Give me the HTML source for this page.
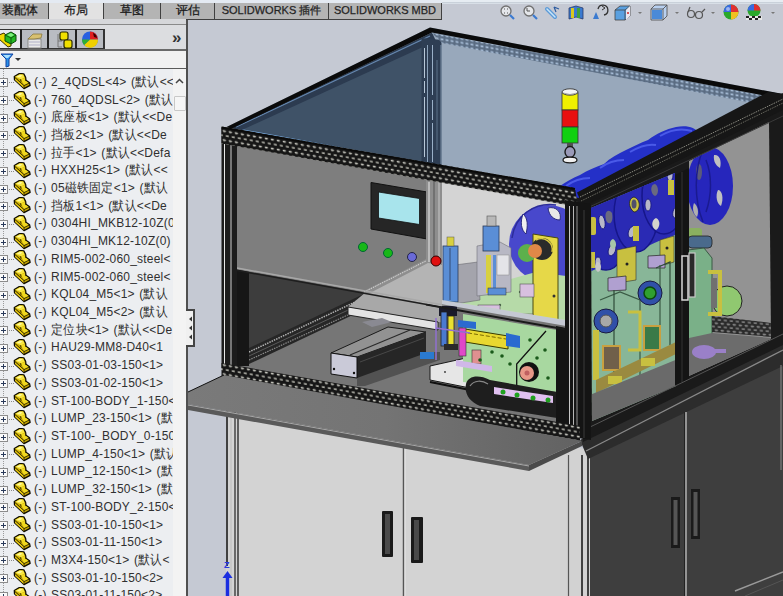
<!DOCTYPE html>
<html><head><meta charset="utf-8">
<style>
*{margin:0;padding:0;box-sizing:border-box}
html,body{width:783px;height:596px;overflow:hidden;background:#c5c9d3;font-family:"Liberation Sans",sans-serif}
#topstrip{position:absolute;left:0;top:0;width:783px;height:4px;background:#e4eaf2}
.tab{position:absolute;top:3px;height:17px;background:#b4b4b4;border-right:1px solid #404040;border-bottom:1px solid #404040;font-size:12px;color:#1a1a1a;text-align:center;line-height:14px;white-space:nowrap;font-weight:normal;-webkit-text-stroke:0.25px #1a1a1a}
.tab.act{background:#e2e2e2;height:19px;border-bottom:1px solid #606060}
#panel{position:absolute;left:0;top:20px;width:188px;height:576px;background:#d8d8d8;border-right:2px solid #505050}
#filt{position:absolute;left:0;top:51px;width:186px;height:18px;background:#f1f1f1;border-bottom:1px solid #5a5a5a}
#tree{position:absolute;left:0;top:69px;width:173px;height:527px;background:#eceef1;overflow:hidden}#tree:before{content:"";position:absolute;left:3px;top:0;height:527px;border-left:1px dotted #9a9a9a}
#sb{position:absolute;left:173px;top:69px;width:13px;height:527px;background:#f3f3f3}
.row{position:absolute;left:0;height:17px;width:173px;white-space:nowrap}
.pb{position:absolute;left:-1px;top:4.5px;width:9px;height:9px;border:1px solid #8c8c8c;background:#fafafa}.pb:before{content:"";position:absolute;left:1px;top:3px;width:5px;height:1px;background:#2a3a5a}.pb:after{content:"";position:absolute;left:3px;top:1px;width:1px;height:5px;background:#2a3a5a}
.dl{position:absolute;left:9px;top:8.5px;width:5px;border-top:1px dotted #8a8a8a}
.ic{position:absolute;left:13px;top:-0.5px}
.tx{position:absolute;left:34px;top:0px;font-size:12px;line-height:17px;color:#303030;word-spacing:1px;letter-spacing:0.2px;transform:scaleY(1.1);transform-origin:0 50%}
svg.scene{position:absolute;left:0;top:0}
</style></head><body>
<div id="topstrip"></div>
<div class="tab" style="left:0;width:49px;text-align:left;padding-left:2px">装配体</div>
<div class="tab act" style="left:49px;width:55px">布局</div>
<div class="tab" style="left:104px;width:57px">草图</div>
<div class="tab" style="left:161px;width:54px">评估</div>
<div class="tab" style="left:215px;width:114px;font-size:11px;font-weight:normal;color:#2a2a2a;line-height:14px">SOLIDWORKS 插件</div>
<div class="tab" style="left:329px;width:113px;font-size:11px;font-weight:normal;color:#2a2a2a;line-height:14px">SOLIDWORKS MBD</div>
<div id="panel"></div>
<div style="position:absolute;left:0;top:19px;width:186px;height:6px;background:#d6d7da;border-bottom:1px solid #8a8a8a"></div>
<div style="position:absolute;left:0;top:25px;width:186px;height:25px;background:#dcdde0"></div>
<div style="position:absolute;left:0;top:29px;width:104px;height:21px;background:#b9bcc2;border-top:1px solid #333;border-bottom:2px solid #333"></div>
<div style="position:absolute;left:0;top:30px;width:20px;height:18px;background:#e9ebee"></div>
<div style="position:absolute;left:20px;top:29px;width:2px;height:21px;background:#222"></div>
<div style="position:absolute;left:47px;top:29px;width:2px;height:21px;background:#222"></div>
<div style="position:absolute;left:75px;top:29px;width:2px;height:21px;background:#222"></div>
<div style="position:absolute;left:103px;top:29px;width:2px;height:21px;background:#333"></div>
<div style="position:absolute;left:0;top:49px;width:186px;height:2px;background:#6a6a6a"></div>
<svg style="position:absolute;left:0;top:29px" width="110" height="22" viewBox="0 0 110 22">
 <path d="M-1 6 L4 4 L11 13 L11 17 L8 18 L-1 10 Z" fill="#f0d800" stroke="#3a3200" stroke-width="1"/>
 <path d="M5 6 L11 3 L16 6 L16 12 L11 15 L5 12 Z" fill="#22b822" stroke="#0a4a0a" stroke-width="1"/>
 <path d="M5 6 L11 9 L16 6 M11 9 L11 15" stroke="#0a4a0a" stroke-width="0.8" fill="none"/>
 <path d="M7 6 L11 4 L14 6 L11 8 Z" fill="#7ef07e"/>
 <rect x="28" y="10" width="13" height="9" fill="#e8e8e8" stroke="#8a8a8a"/>
 <path d="M29 13 H40 M29 16 H40" stroke="#b0b0c8" stroke-width="1"/>
 <path d="M28 10 L33 5 L42 5 L41 9 L34 10 Z" fill="#d8c070" stroke="#8a7a40" stroke-width="0.8"/>
 <path d="M58 5 V18 H62 M58 12 H62" stroke="#777" stroke-width="1" fill="none"/>
 <rect x="60" y="3" width="8" height="8" rx="2" fill="#f0e000" stroke="#2a2a00" stroke-width="1.2"/>
 <rect x="64" y="11" width="8" height="8" rx="2" fill="#f0e000" stroke="#2a2a00" stroke-width="1.2"/>
 <circle cx="90" cy="10.5" r="8" fill="#2a60e0"/>
 <path d="M90 2.5 A8 8 0 0 1 98 10.5 L90 10.5 Z" fill="#e02020"/>
 <path d="M90 10.5 L98 10.5 A8 8 0 0 1 84 16 Z" fill="#f0d000"/>
 <path d="M90 10.5 L84 16 A8 8 0 0 1 82 10.5 Z" fill="#30b030"/>
 <path d="M93 4 A6 6 0 0 1 97 9 L94 8 Z" fill="#400000"/>
</svg>
<div style="position:absolute;left:172px;top:29px;font-size:17px;font-weight:bold;color:#333;line-height:18px">»</div>
<div id="filt"></div>
<svg style="position:absolute;left:0;top:52px" width="30" height="16" viewBox="0 0 30 16">
 <path d="M1 2 H13 L9 7 V14 L6 15 V7 Z" fill="#2a90e8" stroke="#1040a0" stroke-width="1"/>
 <path d="M3 3 H11 L8 6 H6 Z" fill="#a8e0ff"/>
 <path d="M15 6 H21 L18 9 Z" fill="#333"/>
</svg>
<div id="tree">
<div class="row" style="top:4.80px"><span class="pb"></span><span class="dl"></span><svg class="ic" width="19" height="18" viewBox="0 0 19 18"><path d="M1.3 3.5 L6.5 0.4 L10.8 0.9 L12.6 4.4 L13 7.4 L16.6 9.9 L17.1 12.4 L11 15.6 L1.5 6.8 Z" fill="#c8a800" stroke="#0e0c00" stroke-width="1.3" stroke-linejoin="round"/><path d="M2.2 3.8 L6.8 1.2 L10.2 1.6 L11.6 4.6 L8 6.4 L7.4 6.2 Z" fill="#f8e640"/><path d="M8 6.4 L12.2 4.8 L12.4 7.6 L16 10.2 L11.2 12.6 Z" fill="#f0d820"/><path d="M2 5 L11 12.8 L11 15.2 L2 7 Z" fill="#e8c810"/><path d="M2 4.6 L11 12.6 L16.4 10 M11 12.6 L11 15.4 M7.6 6.2 L8 8.8 M12.4 5 L12.6 7.8" fill="none" stroke="#2a2200" stroke-width="0.9"/><path d="M3.5 4 L6.8 2 L9.5 2.2 L7 4.2 Z" fill="#fff8a0"/></svg><span class="tx">(-) 2_4QDSL&lt;4&gt; (默认&lt;&lt;</span></div>
<div class="row" style="top:22.51px"><span class="pb"></span><span class="dl"></span><svg class="ic" width="19" height="18" viewBox="0 0 19 18"><path d="M1.3 3.5 L6.5 0.4 L10.8 0.9 L12.6 4.4 L13 7.4 L16.6 9.9 L17.1 12.4 L11 15.6 L1.5 6.8 Z" fill="#c8a800" stroke="#0e0c00" stroke-width="1.3" stroke-linejoin="round"/><path d="M2.2 3.8 L6.8 1.2 L10.2 1.6 L11.6 4.6 L8 6.4 L7.4 6.2 Z" fill="#f8e640"/><path d="M8 6.4 L12.2 4.8 L12.4 7.6 L16 10.2 L11.2 12.6 Z" fill="#f0d820"/><path d="M2 5 L11 12.8 L11 15.2 L2 7 Z" fill="#e8c810"/><path d="M2 4.6 L11 12.6 L16.4 10 M11 12.6 L11 15.4 M7.6 6.2 L8 8.8 M12.4 5 L12.6 7.8" fill="none" stroke="#2a2200" stroke-width="0.9"/><path d="M3.5 4 L6.8 2 L9.5 2.2 L7 4.2 Z" fill="#fff8a0"/></svg><span class="tx">(-) 760_4QDSL&lt;2&gt; (默认</span></div>
<div class="row" style="top:40.22px"><span class="pb"></span><span class="dl"></span><svg class="ic" width="19" height="18" viewBox="0 0 19 18"><path d="M1.3 3.5 L6.5 0.4 L10.8 0.9 L12.6 4.4 L13 7.4 L16.6 9.9 L17.1 12.4 L11 15.6 L1.5 6.8 Z" fill="#c8a800" stroke="#0e0c00" stroke-width="1.3" stroke-linejoin="round"/><path d="M2.2 3.8 L6.8 1.2 L10.2 1.6 L11.6 4.6 L8 6.4 L7.4 6.2 Z" fill="#f8e640"/><path d="M8 6.4 L12.2 4.8 L12.4 7.6 L16 10.2 L11.2 12.6 Z" fill="#f0d820"/><path d="M2 5 L11 12.8 L11 15.2 L2 7 Z" fill="#e8c810"/><path d="M2 4.6 L11 12.6 L16.4 10 M11 12.6 L11 15.4 M7.6 6.2 L8 8.8 M12.4 5 L12.6 7.8" fill="none" stroke="#2a2200" stroke-width="0.9"/><path d="M3.5 4 L6.8 2 L9.5 2.2 L7 4.2 Z" fill="#fff8a0"/></svg><span class="tx">(-) 底座板&lt;1&gt; (默认&lt;&lt;De</span></div>
<div class="row" style="top:57.93px"><span class="pb"></span><span class="dl"></span><svg class="ic" width="19" height="18" viewBox="0 0 19 18"><path d="M1.3 3.5 L6.5 0.4 L10.8 0.9 L12.6 4.4 L13 7.4 L16.6 9.9 L17.1 12.4 L11 15.6 L1.5 6.8 Z" fill="#c8a800" stroke="#0e0c00" stroke-width="1.3" stroke-linejoin="round"/><path d="M2.2 3.8 L6.8 1.2 L10.2 1.6 L11.6 4.6 L8 6.4 L7.4 6.2 Z" fill="#f8e640"/><path d="M8 6.4 L12.2 4.8 L12.4 7.6 L16 10.2 L11.2 12.6 Z" fill="#f0d820"/><path d="M2 5 L11 12.8 L11 15.2 L2 7 Z" fill="#e8c810"/><path d="M2 4.6 L11 12.6 L16.4 10 M11 12.6 L11 15.4 M7.6 6.2 L8 8.8 M12.4 5 L12.6 7.8" fill="none" stroke="#2a2200" stroke-width="0.9"/><path d="M3.5 4 L6.8 2 L9.5 2.2 L7 4.2 Z" fill="#fff8a0"/></svg><span class="tx">(-) 挡板2&lt;1&gt; (默认&lt;&lt;De</span></div>
<div class="row" style="top:75.64px"><span class="pb"></span><span class="dl"></span><svg class="ic" width="19" height="18" viewBox="0 0 19 18"><path d="M1.3 3.5 L6.5 0.4 L10.8 0.9 L12.6 4.4 L13 7.4 L16.6 9.9 L17.1 12.4 L11 15.6 L1.5 6.8 Z" fill="#c8a800" stroke="#0e0c00" stroke-width="1.3" stroke-linejoin="round"/><path d="M2.2 3.8 L6.8 1.2 L10.2 1.6 L11.6 4.6 L8 6.4 L7.4 6.2 Z" fill="#f8e640"/><path d="M8 6.4 L12.2 4.8 L12.4 7.6 L16 10.2 L11.2 12.6 Z" fill="#f0d820"/><path d="M2 5 L11 12.8 L11 15.2 L2 7 Z" fill="#e8c810"/><path d="M2 4.6 L11 12.6 L16.4 10 M11 12.6 L11 15.4 M7.6 6.2 L8 8.8 M12.4 5 L12.6 7.8" fill="none" stroke="#2a2200" stroke-width="0.9"/><path d="M3.5 4 L6.8 2 L9.5 2.2 L7 4.2 Z" fill="#fff8a0"/></svg><span class="tx">(-) 拉手&lt;1&gt; (默认&lt;&lt;Defa</span></div>
<div class="row" style="top:93.35px"><span class="pb"></span><span class="dl"></span><svg class="ic" width="19" height="18" viewBox="0 0 19 18"><path d="M1.3 3.5 L6.5 0.4 L10.8 0.9 L12.6 4.4 L13 7.4 L16.6 9.9 L17.1 12.4 L11 15.6 L1.5 6.8 Z" fill="#c8a800" stroke="#0e0c00" stroke-width="1.3" stroke-linejoin="round"/><path d="M2.2 3.8 L6.8 1.2 L10.2 1.6 L11.6 4.6 L8 6.4 L7.4 6.2 Z" fill="#f8e640"/><path d="M8 6.4 L12.2 4.8 L12.4 7.6 L16 10.2 L11.2 12.6 Z" fill="#f0d820"/><path d="M2 5 L11 12.8 L11 15.2 L2 7 Z" fill="#e8c810"/><path d="M2 4.6 L11 12.6 L16.4 10 M11 12.6 L11 15.4 M7.6 6.2 L8 8.8 M12.4 5 L12.6 7.8" fill="none" stroke="#2a2200" stroke-width="0.9"/><path d="M3.5 4 L6.8 2 L9.5 2.2 L7 4.2 Z" fill="#fff8a0"/></svg><span class="tx">(-) HXXH25&lt;1&gt; (默认&lt;&lt;</span></div>
<div class="row" style="top:111.06px"><span class="pb"></span><span class="dl"></span><svg class="ic" width="19" height="18" viewBox="0 0 19 18"><path d="M1.3 3.5 L6.5 0.4 L10.8 0.9 L12.6 4.4 L13 7.4 L16.6 9.9 L17.1 12.4 L11 15.6 L1.5 6.8 Z" fill="#c8a800" stroke="#0e0c00" stroke-width="1.3" stroke-linejoin="round"/><path d="M2.2 3.8 L6.8 1.2 L10.2 1.6 L11.6 4.6 L8 6.4 L7.4 6.2 Z" fill="#f8e640"/><path d="M8 6.4 L12.2 4.8 L12.4 7.6 L16 10.2 L11.2 12.6 Z" fill="#f0d820"/><path d="M2 5 L11 12.8 L11 15.2 L2 7 Z" fill="#e8c810"/><path d="M2 4.6 L11 12.6 L16.4 10 M11 12.6 L11 15.4 M7.6 6.2 L8 8.8 M12.4 5 L12.6 7.8" fill="none" stroke="#2a2200" stroke-width="0.9"/><path d="M3.5 4 L6.8 2 L9.5 2.2 L7 4.2 Z" fill="#fff8a0"/></svg><span class="tx">(-) 05磁铁固定&lt;1&gt; (默认</span></div>
<div class="row" style="top:128.77px"><span class="pb"></span><span class="dl"></span><svg class="ic" width="19" height="18" viewBox="0 0 19 18"><path d="M1.3 3.5 L6.5 0.4 L10.8 0.9 L12.6 4.4 L13 7.4 L16.6 9.9 L17.1 12.4 L11 15.6 L1.5 6.8 Z" fill="#c8a800" stroke="#0e0c00" stroke-width="1.3" stroke-linejoin="round"/><path d="M2.2 3.8 L6.8 1.2 L10.2 1.6 L11.6 4.6 L8 6.4 L7.4 6.2 Z" fill="#f8e640"/><path d="M8 6.4 L12.2 4.8 L12.4 7.6 L16 10.2 L11.2 12.6 Z" fill="#f0d820"/><path d="M2 5 L11 12.8 L11 15.2 L2 7 Z" fill="#e8c810"/><path d="M2 4.6 L11 12.6 L16.4 10 M11 12.6 L11 15.4 M7.6 6.2 L8 8.8 M12.4 5 L12.6 7.8" fill="none" stroke="#2a2200" stroke-width="0.9"/><path d="M3.5 4 L6.8 2 L9.5 2.2 L7 4.2 Z" fill="#fff8a0"/></svg><span class="tx">(-) 挡板1&lt;1&gt; (默认&lt;&lt;De</span></div>
<div class="row" style="top:146.48px"><span class="pb"></span><span class="dl"></span><svg class="ic" width="19" height="18" viewBox="0 0 19 18"><path d="M1.3 3.5 L6.5 0.4 L10.8 0.9 L12.6 4.4 L13 7.4 L16.6 9.9 L17.1 12.4 L11 15.6 L1.5 6.8 Z" fill="#c8a800" stroke="#0e0c00" stroke-width="1.3" stroke-linejoin="round"/><path d="M2.2 3.8 L6.8 1.2 L10.2 1.6 L11.6 4.6 L8 6.4 L7.4 6.2 Z" fill="#f8e640"/><path d="M8 6.4 L12.2 4.8 L12.4 7.6 L16 10.2 L11.2 12.6 Z" fill="#f0d820"/><path d="M2 5 L11 12.8 L11 15.2 L2 7 Z" fill="#e8c810"/><path d="M2 4.6 L11 12.6 L16.4 10 M11 12.6 L11 15.4 M7.6 6.2 L8 8.8 M12.4 5 L12.6 7.8" fill="none" stroke="#2a2200" stroke-width="0.9"/><path d="M3.5 4 L6.8 2 L9.5 2.2 L7 4.2 Z" fill="#fff8a0"/></svg><span class="tx">(-) 0304HI_MKB12-10Z(0</span></div>
<div class="row" style="top:164.19px"><span class="pb"></span><span class="dl"></span><svg class="ic" width="19" height="18" viewBox="0 0 19 18"><path d="M1.3 3.5 L6.5 0.4 L10.8 0.9 L12.6 4.4 L13 7.4 L16.6 9.9 L17.1 12.4 L11 15.6 L1.5 6.8 Z" fill="#c8a800" stroke="#0e0c00" stroke-width="1.3" stroke-linejoin="round"/><path d="M2.2 3.8 L6.8 1.2 L10.2 1.6 L11.6 4.6 L8 6.4 L7.4 6.2 Z" fill="#f8e640"/><path d="M8 6.4 L12.2 4.8 L12.4 7.6 L16 10.2 L11.2 12.6 Z" fill="#f0d820"/><path d="M2 5 L11 12.8 L11 15.2 L2 7 Z" fill="#e8c810"/><path d="M2 4.6 L11 12.6 L16.4 10 M11 12.6 L11 15.4 M7.6 6.2 L8 8.8 M12.4 5 L12.6 7.8" fill="none" stroke="#2a2200" stroke-width="0.9"/><path d="M3.5 4 L6.8 2 L9.5 2.2 L7 4.2 Z" fill="#fff8a0"/></svg><span class="tx">(-) 0304HI_MK12-10Z(0)</span></div>
<div class="row" style="top:181.90px"><span class="pb"></span><span class="dl"></span><svg class="ic" width="19" height="18" viewBox="0 0 19 18"><path d="M1.3 3.5 L6.5 0.4 L10.8 0.9 L12.6 4.4 L13 7.4 L16.6 9.9 L17.1 12.4 L11 15.6 L1.5 6.8 Z" fill="#c8a800" stroke="#0e0c00" stroke-width="1.3" stroke-linejoin="round"/><path d="M2.2 3.8 L6.8 1.2 L10.2 1.6 L11.6 4.6 L8 6.4 L7.4 6.2 Z" fill="#f8e640"/><path d="M8 6.4 L12.2 4.8 L12.4 7.6 L16 10.2 L11.2 12.6 Z" fill="#f0d820"/><path d="M2 5 L11 12.8 L11 15.2 L2 7 Z" fill="#e8c810"/><path d="M2 4.6 L11 12.6 L16.4 10 M11 12.6 L11 15.4 M7.6 6.2 L8 8.8 M12.4 5 L12.6 7.8" fill="none" stroke="#2a2200" stroke-width="0.9"/><path d="M3.5 4 L6.8 2 L9.5 2.2 L7 4.2 Z" fill="#fff8a0"/></svg><span class="tx">(-) RIM5-002-060_steel&lt;</span></div>
<div class="row" style="top:199.61px"><span class="pb"></span><span class="dl"></span><svg class="ic" width="19" height="18" viewBox="0 0 19 18"><path d="M1.3 3.5 L6.5 0.4 L10.8 0.9 L12.6 4.4 L13 7.4 L16.6 9.9 L17.1 12.4 L11 15.6 L1.5 6.8 Z" fill="#c8a800" stroke="#0e0c00" stroke-width="1.3" stroke-linejoin="round"/><path d="M2.2 3.8 L6.8 1.2 L10.2 1.6 L11.6 4.6 L8 6.4 L7.4 6.2 Z" fill="#f8e640"/><path d="M8 6.4 L12.2 4.8 L12.4 7.6 L16 10.2 L11.2 12.6 Z" fill="#f0d820"/><path d="M2 5 L11 12.8 L11 15.2 L2 7 Z" fill="#e8c810"/><path d="M2 4.6 L11 12.6 L16.4 10 M11 12.6 L11 15.4 M7.6 6.2 L8 8.8 M12.4 5 L12.6 7.8" fill="none" stroke="#2a2200" stroke-width="0.9"/><path d="M3.5 4 L6.8 2 L9.5 2.2 L7 4.2 Z" fill="#fff8a0"/></svg><span class="tx">(-) RIM5-002-060_steel&lt;</span></div>
<div class="row" style="top:217.32px"><span class="pb"></span><span class="dl"></span><svg class="ic" width="19" height="18" viewBox="0 0 19 18"><path d="M1.3 3.5 L6.5 0.4 L10.8 0.9 L12.6 4.4 L13 7.4 L16.6 9.9 L17.1 12.4 L11 15.6 L1.5 6.8 Z" fill="#c8a800" stroke="#0e0c00" stroke-width="1.3" stroke-linejoin="round"/><path d="M2.2 3.8 L6.8 1.2 L10.2 1.6 L11.6 4.6 L8 6.4 L7.4 6.2 Z" fill="#f8e640"/><path d="M8 6.4 L12.2 4.8 L12.4 7.6 L16 10.2 L11.2 12.6 Z" fill="#f0d820"/><path d="M2 5 L11 12.8 L11 15.2 L2 7 Z" fill="#e8c810"/><path d="M2 4.6 L11 12.6 L16.4 10 M11 12.6 L11 15.4 M7.6 6.2 L8 8.8 M12.4 5 L12.6 7.8" fill="none" stroke="#2a2200" stroke-width="0.9"/><path d="M3.5 4 L6.8 2 L9.5 2.2 L7 4.2 Z" fill="#fff8a0"/></svg><span class="tx">(-) KQL04_M5&lt;1&gt; (默认</span></div>
<div class="row" style="top:235.03px"><span class="pb"></span><span class="dl"></span><svg class="ic" width="19" height="18" viewBox="0 0 19 18"><path d="M1.3 3.5 L6.5 0.4 L10.8 0.9 L12.6 4.4 L13 7.4 L16.6 9.9 L17.1 12.4 L11 15.6 L1.5 6.8 Z" fill="#c8a800" stroke="#0e0c00" stroke-width="1.3" stroke-linejoin="round"/><path d="M2.2 3.8 L6.8 1.2 L10.2 1.6 L11.6 4.6 L8 6.4 L7.4 6.2 Z" fill="#f8e640"/><path d="M8 6.4 L12.2 4.8 L12.4 7.6 L16 10.2 L11.2 12.6 Z" fill="#f0d820"/><path d="M2 5 L11 12.8 L11 15.2 L2 7 Z" fill="#e8c810"/><path d="M2 4.6 L11 12.6 L16.4 10 M11 12.6 L11 15.4 M7.6 6.2 L8 8.8 M12.4 5 L12.6 7.8" fill="none" stroke="#2a2200" stroke-width="0.9"/><path d="M3.5 4 L6.8 2 L9.5 2.2 L7 4.2 Z" fill="#fff8a0"/></svg><span class="tx">(-) KQL04_M5&lt;2&gt; (默认</span></div>
<div class="row" style="top:252.74px"><span class="pb"></span><span class="dl"></span><svg class="ic" width="19" height="18" viewBox="0 0 19 18"><path d="M1.3 3.5 L6.5 0.4 L10.8 0.9 L12.6 4.4 L13 7.4 L16.6 9.9 L17.1 12.4 L11 15.6 L1.5 6.8 Z" fill="#c8a800" stroke="#0e0c00" stroke-width="1.3" stroke-linejoin="round"/><path d="M2.2 3.8 L6.8 1.2 L10.2 1.6 L11.6 4.6 L8 6.4 L7.4 6.2 Z" fill="#f8e640"/><path d="M8 6.4 L12.2 4.8 L12.4 7.6 L16 10.2 L11.2 12.6 Z" fill="#f0d820"/><path d="M2 5 L11 12.8 L11 15.2 L2 7 Z" fill="#e8c810"/><path d="M2 4.6 L11 12.6 L16.4 10 M11 12.6 L11 15.4 M7.6 6.2 L8 8.8 M12.4 5 L12.6 7.8" fill="none" stroke="#2a2200" stroke-width="0.9"/><path d="M3.5 4 L6.8 2 L9.5 2.2 L7 4.2 Z" fill="#fff8a0"/></svg><span class="tx">(-) 定位块&lt;1&gt; (默认&lt;&lt;De</span></div>
<div class="row" style="top:270.45px"><span class="pb"></span><span class="dl"></span><svg class="ic" width="19" height="18" viewBox="0 0 19 18"><path d="M1.3 3.5 L6.5 0.4 L10.8 0.9 L12.6 4.4 L13 7.4 L16.6 9.9 L17.1 12.4 L11 15.6 L1.5 6.8 Z" fill="#c8a800" stroke="#0e0c00" stroke-width="1.3" stroke-linejoin="round"/><path d="M2.2 3.8 L6.8 1.2 L10.2 1.6 L11.6 4.6 L8 6.4 L7.4 6.2 Z" fill="#f8e640"/><path d="M8 6.4 L12.2 4.8 L12.4 7.6 L16 10.2 L11.2 12.6 Z" fill="#f0d820"/><path d="M2 5 L11 12.8 L11 15.2 L2 7 Z" fill="#e8c810"/><path d="M2 4.6 L11 12.6 L16.4 10 M11 12.6 L11 15.4 M7.6 6.2 L8 8.8 M12.4 5 L12.6 7.8" fill="none" stroke="#2a2200" stroke-width="0.9"/><path d="M3.5 4 L6.8 2 L9.5 2.2 L7 4.2 Z" fill="#fff8a0"/></svg><span class="tx">(-) HAU29-MM8-D40&lt;1</span></div>
<div class="row" style="top:288.16px"><span class="pb"></span><span class="dl"></span><svg class="ic" width="19" height="18" viewBox="0 0 19 18"><path d="M1.3 3.5 L6.5 0.4 L10.8 0.9 L12.6 4.4 L13 7.4 L16.6 9.9 L17.1 12.4 L11 15.6 L1.5 6.8 Z" fill="#c8a800" stroke="#0e0c00" stroke-width="1.3" stroke-linejoin="round"/><path d="M2.2 3.8 L6.8 1.2 L10.2 1.6 L11.6 4.6 L8 6.4 L7.4 6.2 Z" fill="#f8e640"/><path d="M8 6.4 L12.2 4.8 L12.4 7.6 L16 10.2 L11.2 12.6 Z" fill="#f0d820"/><path d="M2 5 L11 12.8 L11 15.2 L2 7 Z" fill="#e8c810"/><path d="M2 4.6 L11 12.6 L16.4 10 M11 12.6 L11 15.4 M7.6 6.2 L8 8.8 M12.4 5 L12.6 7.8" fill="none" stroke="#2a2200" stroke-width="0.9"/><path d="M3.5 4 L6.8 2 L9.5 2.2 L7 4.2 Z" fill="#fff8a0"/></svg><span class="tx">(-) SS03-01-03-150&lt;1&gt;</span></div>
<div class="row" style="top:305.87px"><span class="pb"></span><span class="dl"></span><svg class="ic" width="19" height="18" viewBox="0 0 19 18"><path d="M1.3 3.5 L6.5 0.4 L10.8 0.9 L12.6 4.4 L13 7.4 L16.6 9.9 L17.1 12.4 L11 15.6 L1.5 6.8 Z" fill="#c8a800" stroke="#0e0c00" stroke-width="1.3" stroke-linejoin="round"/><path d="M2.2 3.8 L6.8 1.2 L10.2 1.6 L11.6 4.6 L8 6.4 L7.4 6.2 Z" fill="#f8e640"/><path d="M8 6.4 L12.2 4.8 L12.4 7.6 L16 10.2 L11.2 12.6 Z" fill="#f0d820"/><path d="M2 5 L11 12.8 L11 15.2 L2 7 Z" fill="#e8c810"/><path d="M2 4.6 L11 12.6 L16.4 10 M11 12.6 L11 15.4 M7.6 6.2 L8 8.8 M12.4 5 L12.6 7.8" fill="none" stroke="#2a2200" stroke-width="0.9"/><path d="M3.5 4 L6.8 2 L9.5 2.2 L7 4.2 Z" fill="#fff8a0"/></svg><span class="tx">(-) SS03-01-02-150&lt;1&gt;</span></div>
<div class="row" style="top:323.58px"><span class="pb"></span><span class="dl"></span><svg class="ic" width="19" height="18" viewBox="0 0 19 18"><path d="M1.3 3.5 L6.5 0.4 L10.8 0.9 L12.6 4.4 L13 7.4 L16.6 9.9 L17.1 12.4 L11 15.6 L1.5 6.8 Z" fill="#c8a800" stroke="#0e0c00" stroke-width="1.3" stroke-linejoin="round"/><path d="M2.2 3.8 L6.8 1.2 L10.2 1.6 L11.6 4.6 L8 6.4 L7.4 6.2 Z" fill="#f8e640"/><path d="M8 6.4 L12.2 4.8 L12.4 7.6 L16 10.2 L11.2 12.6 Z" fill="#f0d820"/><path d="M2 5 L11 12.8 L11 15.2 L2 7 Z" fill="#e8c810"/><path d="M2 4.6 L11 12.6 L16.4 10 M11 12.6 L11 15.4 M7.6 6.2 L8 8.8 M12.4 5 L12.6 7.8" fill="none" stroke="#2a2200" stroke-width="0.9"/><path d="M3.5 4 L6.8 2 L9.5 2.2 L7 4.2 Z" fill="#fff8a0"/></svg><span class="tx">(-) ST-100-BODY_1-150&lt;</span></div>
<div class="row" style="top:341.29px"><span class="pb"></span><span class="dl"></span><svg class="ic" width="19" height="18" viewBox="0 0 19 18"><path d="M1.3 3.5 L6.5 0.4 L10.8 0.9 L12.6 4.4 L13 7.4 L16.6 9.9 L17.1 12.4 L11 15.6 L1.5 6.8 Z" fill="#c8a800" stroke="#0e0c00" stroke-width="1.3" stroke-linejoin="round"/><path d="M2.2 3.8 L6.8 1.2 L10.2 1.6 L11.6 4.6 L8 6.4 L7.4 6.2 Z" fill="#f8e640"/><path d="M8 6.4 L12.2 4.8 L12.4 7.6 L16 10.2 L11.2 12.6 Z" fill="#f0d820"/><path d="M2 5 L11 12.8 L11 15.2 L2 7 Z" fill="#e8c810"/><path d="M2 4.6 L11 12.6 L16.4 10 M11 12.6 L11 15.4 M7.6 6.2 L8 8.8 M12.4 5 L12.6 7.8" fill="none" stroke="#2a2200" stroke-width="0.9"/><path d="M3.5 4 L6.8 2 L9.5 2.2 L7 4.2 Z" fill="#fff8a0"/></svg><span class="tx">(-) LUMP_23-150&lt;1&gt; (默</span></div>
<div class="row" style="top:359.00px"><span class="pb"></span><span class="dl"></span><svg class="ic" width="19" height="18" viewBox="0 0 19 18"><path d="M1.3 3.5 L6.5 0.4 L10.8 0.9 L12.6 4.4 L13 7.4 L16.6 9.9 L17.1 12.4 L11 15.6 L1.5 6.8 Z" fill="#c8a800" stroke="#0e0c00" stroke-width="1.3" stroke-linejoin="round"/><path d="M2.2 3.8 L6.8 1.2 L10.2 1.6 L11.6 4.6 L8 6.4 L7.4 6.2 Z" fill="#f8e640"/><path d="M8 6.4 L12.2 4.8 L12.4 7.6 L16 10.2 L11.2 12.6 Z" fill="#f0d820"/><path d="M2 5 L11 12.8 L11 15.2 L2 7 Z" fill="#e8c810"/><path d="M2 4.6 L11 12.6 L16.4 10 M11 12.6 L11 15.4 M7.6 6.2 L8 8.8 M12.4 5 L12.6 7.8" fill="none" stroke="#2a2200" stroke-width="0.9"/><path d="M3.5 4 L6.8 2 L9.5 2.2 L7 4.2 Z" fill="#fff8a0"/></svg><span class="tx">(-) ST-100-_BODY_0-150</span></div>
<div class="row" style="top:376.71px"><span class="pb"></span><span class="dl"></span><svg class="ic" width="19" height="18" viewBox="0 0 19 18"><path d="M1.3 3.5 L6.5 0.4 L10.8 0.9 L12.6 4.4 L13 7.4 L16.6 9.9 L17.1 12.4 L11 15.6 L1.5 6.8 Z" fill="#c8a800" stroke="#0e0c00" stroke-width="1.3" stroke-linejoin="round"/><path d="M2.2 3.8 L6.8 1.2 L10.2 1.6 L11.6 4.6 L8 6.4 L7.4 6.2 Z" fill="#f8e640"/><path d="M8 6.4 L12.2 4.8 L12.4 7.6 L16 10.2 L11.2 12.6 Z" fill="#f0d820"/><path d="M2 5 L11 12.8 L11 15.2 L2 7 Z" fill="#e8c810"/><path d="M2 4.6 L11 12.6 L16.4 10 M11 12.6 L11 15.4 M7.6 6.2 L8 8.8 M12.4 5 L12.6 7.8" fill="none" stroke="#2a2200" stroke-width="0.9"/><path d="M3.5 4 L6.8 2 L9.5 2.2 L7 4.2 Z" fill="#fff8a0"/></svg><span class="tx">(-) LUMP_4-150&lt;1&gt; (默认</span></div>
<div class="row" style="top:394.42px"><span class="pb"></span><span class="dl"></span><svg class="ic" width="19" height="18" viewBox="0 0 19 18"><path d="M1.3 3.5 L6.5 0.4 L10.8 0.9 L12.6 4.4 L13 7.4 L16.6 9.9 L17.1 12.4 L11 15.6 L1.5 6.8 Z" fill="#c8a800" stroke="#0e0c00" stroke-width="1.3" stroke-linejoin="round"/><path d="M2.2 3.8 L6.8 1.2 L10.2 1.6 L11.6 4.6 L8 6.4 L7.4 6.2 Z" fill="#f8e640"/><path d="M8 6.4 L12.2 4.8 L12.4 7.6 L16 10.2 L11.2 12.6 Z" fill="#f0d820"/><path d="M2 5 L11 12.8 L11 15.2 L2 7 Z" fill="#e8c810"/><path d="M2 4.6 L11 12.6 L16.4 10 M11 12.6 L11 15.4 M7.6 6.2 L8 8.8 M12.4 5 L12.6 7.8" fill="none" stroke="#2a2200" stroke-width="0.9"/><path d="M3.5 4 L6.8 2 L9.5 2.2 L7 4.2 Z" fill="#fff8a0"/></svg><span class="tx">(-) LUMP_12-150&lt;1&gt; (默</span></div>
<div class="row" style="top:412.13px"><span class="pb"></span><span class="dl"></span><svg class="ic" width="19" height="18" viewBox="0 0 19 18"><path d="M1.3 3.5 L6.5 0.4 L10.8 0.9 L12.6 4.4 L13 7.4 L16.6 9.9 L17.1 12.4 L11 15.6 L1.5 6.8 Z" fill="#c8a800" stroke="#0e0c00" stroke-width="1.3" stroke-linejoin="round"/><path d="M2.2 3.8 L6.8 1.2 L10.2 1.6 L11.6 4.6 L8 6.4 L7.4 6.2 Z" fill="#f8e640"/><path d="M8 6.4 L12.2 4.8 L12.4 7.6 L16 10.2 L11.2 12.6 Z" fill="#f0d820"/><path d="M2 5 L11 12.8 L11 15.2 L2 7 Z" fill="#e8c810"/><path d="M2 4.6 L11 12.6 L16.4 10 M11 12.6 L11 15.4 M7.6 6.2 L8 8.8 M12.4 5 L12.6 7.8" fill="none" stroke="#2a2200" stroke-width="0.9"/><path d="M3.5 4 L6.8 2 L9.5 2.2 L7 4.2 Z" fill="#fff8a0"/></svg><span class="tx">(-) LUMP_32-150&lt;1&gt; (默</span></div>
<div class="row" style="top:429.84px"><span class="pb"></span><span class="dl"></span><svg class="ic" width="19" height="18" viewBox="0 0 19 18"><path d="M1.3 3.5 L6.5 0.4 L10.8 0.9 L12.6 4.4 L13 7.4 L16.6 9.9 L17.1 12.4 L11 15.6 L1.5 6.8 Z" fill="#c8a800" stroke="#0e0c00" stroke-width="1.3" stroke-linejoin="round"/><path d="M2.2 3.8 L6.8 1.2 L10.2 1.6 L11.6 4.6 L8 6.4 L7.4 6.2 Z" fill="#f8e640"/><path d="M8 6.4 L12.2 4.8 L12.4 7.6 L16 10.2 L11.2 12.6 Z" fill="#f0d820"/><path d="M2 5 L11 12.8 L11 15.2 L2 7 Z" fill="#e8c810"/><path d="M2 4.6 L11 12.6 L16.4 10 M11 12.6 L11 15.4 M7.6 6.2 L8 8.8 M12.4 5 L12.6 7.8" fill="none" stroke="#2a2200" stroke-width="0.9"/><path d="M3.5 4 L6.8 2 L9.5 2.2 L7 4.2 Z" fill="#fff8a0"/></svg><span class="tx">(-) ST-100-BODY_2-150&lt;</span></div>
<div class="row" style="top:447.55px"><span class="pb"></span><span class="dl"></span><svg class="ic" width="19" height="18" viewBox="0 0 19 18"><path d="M1.3 3.5 L6.5 0.4 L10.8 0.9 L12.6 4.4 L13 7.4 L16.6 9.9 L17.1 12.4 L11 15.6 L1.5 6.8 Z" fill="#c8a800" stroke="#0e0c00" stroke-width="1.3" stroke-linejoin="round"/><path d="M2.2 3.8 L6.8 1.2 L10.2 1.6 L11.6 4.6 L8 6.4 L7.4 6.2 Z" fill="#f8e640"/><path d="M8 6.4 L12.2 4.8 L12.4 7.6 L16 10.2 L11.2 12.6 Z" fill="#f0d820"/><path d="M2 5 L11 12.8 L11 15.2 L2 7 Z" fill="#e8c810"/><path d="M2 4.6 L11 12.6 L16.4 10 M11 12.6 L11 15.4 M7.6 6.2 L8 8.8 M12.4 5 L12.6 7.8" fill="none" stroke="#2a2200" stroke-width="0.9"/><path d="M3.5 4 L6.8 2 L9.5 2.2 L7 4.2 Z" fill="#fff8a0"/></svg><span class="tx">(-) SS03-01-10-150&lt;1&gt;</span></div>
<div class="row" style="top:465.26px"><span class="pb"></span><span class="dl"></span><svg class="ic" width="19" height="18" viewBox="0 0 19 18"><path d="M1.3 3.5 L6.5 0.4 L10.8 0.9 L12.6 4.4 L13 7.4 L16.6 9.9 L17.1 12.4 L11 15.6 L1.5 6.8 Z" fill="#c8a800" stroke="#0e0c00" stroke-width="1.3" stroke-linejoin="round"/><path d="M2.2 3.8 L6.8 1.2 L10.2 1.6 L11.6 4.6 L8 6.4 L7.4 6.2 Z" fill="#f8e640"/><path d="M8 6.4 L12.2 4.8 L12.4 7.6 L16 10.2 L11.2 12.6 Z" fill="#f0d820"/><path d="M2 5 L11 12.8 L11 15.2 L2 7 Z" fill="#e8c810"/><path d="M2 4.6 L11 12.6 L16.4 10 M11 12.6 L11 15.4 M7.6 6.2 L8 8.8 M12.4 5 L12.6 7.8" fill="none" stroke="#2a2200" stroke-width="0.9"/><path d="M3.5 4 L6.8 2 L9.5 2.2 L7 4.2 Z" fill="#fff8a0"/></svg><span class="tx">(-) SS03-01-11-150&lt;1&gt;</span></div>
<div class="row" style="top:482.97px"><span class="pb"></span><span class="dl"></span><svg class="ic" width="19" height="18" viewBox="0 0 19 18"><path d="M1.3 3.5 L6.5 0.4 L10.8 0.9 L12.6 4.4 L13 7.4 L16.6 9.9 L17.1 12.4 L11 15.6 L1.5 6.8 Z" fill="#c8a800" stroke="#0e0c00" stroke-width="1.3" stroke-linejoin="round"/><path d="M2.2 3.8 L6.8 1.2 L10.2 1.6 L11.6 4.6 L8 6.4 L7.4 6.2 Z" fill="#f8e640"/><path d="M8 6.4 L12.2 4.8 L12.4 7.6 L16 10.2 L11.2 12.6 Z" fill="#f0d820"/><path d="M2 5 L11 12.8 L11 15.2 L2 7 Z" fill="#e8c810"/><path d="M2 4.6 L11 12.6 L16.4 10 M11 12.6 L11 15.4 M7.6 6.2 L8 8.8 M12.4 5 L12.6 7.8" fill="none" stroke="#2a2200" stroke-width="0.9"/><path d="M3.5 4 L6.8 2 L9.5 2.2 L7 4.2 Z" fill="#fff8a0"/></svg><span class="tx">(-) M3X4-150&lt;1&gt; (默认&lt;</span></div>
<div class="row" style="top:500.68px"><span class="pb"></span><span class="dl"></span><svg class="ic" width="19" height="18" viewBox="0 0 19 18"><path d="M1.3 3.5 L6.5 0.4 L10.8 0.9 L12.6 4.4 L13 7.4 L16.6 9.9 L17.1 12.4 L11 15.6 L1.5 6.8 Z" fill="#c8a800" stroke="#0e0c00" stroke-width="1.3" stroke-linejoin="round"/><path d="M2.2 3.8 L6.8 1.2 L10.2 1.6 L11.6 4.6 L8 6.4 L7.4 6.2 Z" fill="#f8e640"/><path d="M8 6.4 L12.2 4.8 L12.4 7.6 L16 10.2 L11.2 12.6 Z" fill="#f0d820"/><path d="M2 5 L11 12.8 L11 15.2 L2 7 Z" fill="#e8c810"/><path d="M2 4.6 L11 12.6 L16.4 10 M11 12.6 L11 15.4 M7.6 6.2 L8 8.8 M12.4 5 L12.6 7.8" fill="none" stroke="#2a2200" stroke-width="0.9"/><path d="M3.5 4 L6.8 2 L9.5 2.2 L7 4.2 Z" fill="#fff8a0"/></svg><span class="tx">(-) SS03-01-10-150&lt;2&gt;</span></div>
<div class="row" style="top:518.39px"><span class="pb"></span><span class="dl"></span><svg class="ic" width="19" height="18" viewBox="0 0 19 18"><path d="M1.3 3.5 L6.5 0.4 L10.8 0.9 L12.6 4.4 L13 7.4 L16.6 9.9 L17.1 12.4 L11 15.6 L1.5 6.8 Z" fill="#c8a800" stroke="#0e0c00" stroke-width="1.3" stroke-linejoin="round"/><path d="M2.2 3.8 L6.8 1.2 L10.2 1.6 L11.6 4.6 L8 6.4 L7.4 6.2 Z" fill="#f8e640"/><path d="M8 6.4 L12.2 4.8 L12.4 7.6 L16 10.2 L11.2 12.6 Z" fill="#f0d820"/><path d="M2 5 L11 12.8 L11 15.2 L2 7 Z" fill="#e8c810"/><path d="M2 4.6 L11 12.6 L16.4 10 M11 12.6 L11 15.4 M7.6 6.2 L8 8.8 M12.4 5 L12.6 7.8" fill="none" stroke="#2a2200" stroke-width="0.9"/><path d="M3.5 4 L6.8 2 L9.5 2.2 L7 4.2 Z" fill="#fff8a0"/></svg><span class="tx">(-) SS03-01-11-150&lt;2&gt;</span></div></div>
<div id="sb"></div>
<div style="position:absolute;left:174px;top:96px;width:12px;height:15px;background:#f6f6f6;border:1px solid #c8c8c8;border-radius:1px"></div>
<svg style="position:absolute;left:173px;top:76px" width="13" height="10"><path d="M3 7 L6.5 3.5 L10 7" fill="none" stroke="#444" stroke-width="1.5"/></svg>
<svg class="scene" width="783" height="596" viewBox="0 0 783 596">
<defs>
 <pattern id="dots" width="6" height="9" patternUnits="userSpaceOnUse" patternTransform="skewY(10)">
  <rect width="6" height="9" fill="#161616"/>
  <rect x="0.6" y="0.8" width="3.4" height="1.6" rx="0.8" fill="#c4c4bc"/>
  <rect x="3.6" y="5.3" width="3.4" height="1.6" rx="0.8" fill="#a8a8a0"/>
  <rect x="-2.4" y="5.3" width="3.4" height="1.6" rx="0.8" fill="#a8a8a0"/>
 </pattern>
 <pattern id="dotsD" width="6" height="7" patternUnits="userSpaceOnUse" patternTransform="skewY(5)">
  <rect width="6" height="7" fill="#2a2a2a"/>
  <rect x="0.5" y="0.8" width="3.6" height="1.6" rx="0.8" fill="#8a8a8a"/>
  <rect x="3.5" y="4.3" width="3.6" height="1.6" rx="0.8" fill="#7a7a7a"/>
  <rect x="-2.5" y="4.3" width="3.6" height="1.6" rx="0.8" fill="#7a7a7a"/>
 </pattern>
 <pattern id="dotsB" width="5" height="4" patternUnits="userSpaceOnUse" patternTransform="skewY(10)">
  <rect width="5" height="4" fill="#5a6c82"/>
  <rect x="0.5" y="0.5" width="3" height="1.8" fill="#a6bcd6"/>
 </pattern>
 <linearGradient id="slabG" x1="188" y1="0" x2="582" y2="0" gradientUnits="userSpaceOnUse"><stop offset="0" stop-color="#7a7a7a"/><stop offset="0.5" stop-color="#747474"/><stop offset="1" stop-color="#626262"/></linearGradient>
 <clipPath id="gL"><polygon points="591,208 675,173 676,386 592,421"/></clipPath>
 <clipPath id="gR"><polygon points="689,161 769,122 771,339 689,376"/></clipPath>
 <clipPath id="gF"><polygon points="442,175 566,196 566,320 442,300"/></clipPath>
 <clipPath id="oF"><polygon points="237,268 566,326 566,432 237,372"/></clipPath>
</defs>
<!-- viewport bg -->
<rect x="188" y="20" width="595" height="576" fill="#c5c9d3"/>

<!-- ===== cabinet below ===== -->
<polygon points="226,380 590,450 590,596 226,596" fill="#d3d3d3"/>
<line x1="227" y1="400" x2="227" y2="566" stroke="#111" stroke-width="1.5"/>
<line x1="235" y1="410" x2="235" y2="596" stroke="#222" stroke-width="1.2"/><line x1="238" y1="410" x2="238" y2="596" stroke="#111" stroke-width="1.2"/>
<line x1="231" y1="410" x2="231" y2="596" stroke="#bbb" stroke-width="1"/>
<line x1="403.5" y1="445" x2="403.5" y2="596" stroke="#555" stroke-width="1.5"/>
<line x1="405" y1="445" x2="405" y2="596" stroke="#eee" stroke-width="0.8"/>
<rect x="382" y="511" width="11" height="46" fill="#1a1a1a" rx="1"/>
<rect x="385" y="514" width="5" height="40" fill="#4a4a4a"/>
<rect x="411" y="517" width="12" height="46" fill="#1a1a1a" rx="1"/>
<rect x="414" y="520" width="5" height="40" fill="#4a4a4a"/>
<rect x="566" y="450" width="24" height="146" fill="#d2d2d2"/>
<line x1="568.5" y1="455" x2="568.5" y2="596" stroke="#555" stroke-width="1.2"/>
<line x1="582" y1="455" x2="582" y2="596" stroke="#111" stroke-width="1.5"/>
<line x1="588" y1="455" x2="588" y2="596" stroke="#111" stroke-width="1.5"/>
<polygon points="590,455 783,345 783,596 590,596" fill="#3e3e3e"/>
<polygon points="580,440 783,334 783,366 588,459" fill="#2c2c2c"/>
<polyline points="586,451 783,350" stroke="#8a8a8a" stroke-width="1.2" fill="none"/>
<line x1="686" y1="412" x2="686" y2="596" stroke="#cfcfcf" stroke-width="1.2"/>
<line x1="684.5" y1="412" x2="684.5" y2="596" stroke="#222" stroke-width="1"/>
<rect x="671" y="497" width="9" height="51" fill="#1a1a1a"/>
<rect x="673.5" y="500" width="4" height="45" fill="#555"/>
<rect x="691" y="489" width="9" height="50" fill="#1a1a1a"/>
<rect x="693.5" y="492" width="4" height="44" fill="#555"/>
<polyline points="735,591 783,572" stroke="#9a9a9a" stroke-width="1.5" fill="none"/><polyline points="745,596 783,580" stroke="#555" stroke-width="1" fill="none"/><line x1="781" y1="365" x2="781" y2="470" stroke="#8a8a8a" stroke-width="1"/>

<!-- ===== right face of enclosure ===== -->
<polygon points="573,189 783,93 783,345 583,442" fill="#1a1a1a"/>
<!-- left door interior -->
<g clip-path="url(#gL)">
 <rect x="585" y="160" width="100" height="270" fill="#88b698"/>
 <path d="M585,160 H685 V232 C672,236 660,240 648,246 C630,254 612,262 585,274 Z" fill="#2a2ab2"/>
 <ellipse cx="606" cy="232" rx="22" ry="38" fill="#2828b0" stroke="#16168a" stroke-width="1.5"/>
 <ellipse cx="636" cy="214" rx="22" ry="38" fill="#2a2ab4" stroke="#16168a" stroke-width="1.5"/>
 <ellipse cx="664" cy="196" rx="22" ry="38" fill="#2a2ab6" stroke="#16168a" stroke-width="1.5"/>
 <g fill="#b8b8c8" stroke="#14147a" stroke-width="0.8">
  <ellipse cx="602" cy="222" rx="3" ry="7" transform="rotate(-10 602 222)"/>
  <ellipse cx="612" cy="250" rx="3.5" ry="6" transform="rotate(20 612 250)"/>
  <ellipse cx="598" cy="262" rx="3" ry="5"/>
  <ellipse cx="632" cy="232" rx="3.5" ry="6" transform="rotate(20 632 232)"/>
  <ellipse cx="648" cy="205" rx="3" ry="6"/>
  <ellipse cx="670" cy="175" rx="3" ry="6"/>
  <ellipse cx="676" cy="212" rx="3" ry="6" transform="rotate(15 676 212)"/>
 </g>
 <path d="M612,213 C608,208 604,212 606,220 C608,226 614,224 612,213 Z" fill="#6a6a80"/>
 <path d="M634,197 C628,198 628,208 634,212 C640,212 642,200 634,197 Z" fill="#c8c040" stroke="#222" stroke-width="0.8"/>
 <ellipse cx="634" cy="204" rx="2.5" ry="4.5" fill="#50506a"/>
 <path d="M655,184 C650,184 650,194 655,196 C659,195 659,186 655,184 Z" fill="#6a6a80"/>
 <path d="M656,218 C651,220 651,228 656,230 C660,228 661,220 656,218 Z" fill="#d4d4cc"/>
 <path d="M613,239 C609,240 609,247 613,249 C617,248 617,241 613,239 Z" fill="#a8c8a8"/>
 <path d="M598,262 C594,262 594,270 598,272 C602,271 602,263 598,262 Z" fill="#c8c8c8"/>
 <rect x="590" y="217" width="6" height="18" fill="#c8c040" rx="2"/>
 <rect x="590" y="252" width="5" height="16" fill="#c8c040"/>
 <rect x="633" y="226" width="6" height="15" fill="#c8c040"/>
 <rect x="668" y="180" width="6" height="15" fill="#c8c040"/>
 <polygon points="660,240 674,236 674,262 660,266" fill="#c8c040" stroke="#333" stroke-width="0.6"/>
 <circle cx="667" cy="248" r="1.5" fill="#222"/>
 <polygon points="617,250 636,246 636,280 617,283" fill="#c8c040" stroke="#333" stroke-width="0.6"/>
 <circle cx="627" cy="264" r="1.5" fill="#222"/>
 <polygon points="648,256 665,255 665,268 648,268" fill="#b0a0d0" stroke="#333" stroke-width="0.8"/>
 <polygon points="608,278 626,276 626,290 608,291" fill="#b0a0d0" stroke="#333" stroke-width="0.8"/>
 <polyline points="600,300 620,292 640,300 640,380" stroke="#3a5a44" stroke-width="1.2" fill="none"/>
 <polyline points="614,290 614,372 M622,300 622,368 M590,300 612,296" stroke="#2e4a38" stroke-width="1.2" fill="none"/>
 <polyline points="656,268 670,262 670,345" stroke="#2e4a38" stroke-width="1.2" fill="none"/>
 <polyline points="660,265 660,360" stroke="#3a5a44" stroke-width="1.2" fill="none"/>
 <circle cx="606" cy="321" r="12" fill="#3050a8" stroke="#1a1a40" stroke-width="1"/>
 <circle cx="606" cy="321" r="6" fill="#a8a8a8" stroke="#555" stroke-width="1"/>
 <circle cx="650" cy="293" r="12" fill="#3050a8" stroke="#1a1a40" stroke-width="1"/>
 <circle cx="650" cy="293" r="6" fill="#30a030" stroke="#0a4a0a" stroke-width="1.5"/>
 <path d="M628,312 H640 V350 H628" stroke="#c8c040" stroke-width="3" fill="none"/>
 <rect x="644" y="326" width="16" height="24" fill="#3a7a48" stroke="#c8a040" stroke-width="2"/>
 <rect x="593" y="330" width="6" height="50" fill="#c8c040"/>
 <rect x="603" y="346" width="17" height="24" fill="#70604a" stroke="#c8a040" stroke-width="2"/>
 <polygon points="596,380 676,342 676,354 596,393" fill="#9a8a40"/>
 <rect x="608" y="376" width="14" height="8" fill="#c8c040"/>
 <rect x="641" y="358" width="14" height="8" fill="#c8c040"/>
 <polygon points="585,397 685,356 685,430 585,430" fill="#6a6a6a"/>
</g>
<!-- right door interior -->
<g clip-path="url(#gR)">
 <rect x="680" y="110" width="100" height="270" fill="#939393"/>
 <ellipse cx="710" cy="186" rx="23" ry="39" fill="#2626bc"/>
 <path d="M714,155 C719,154 722,160 720,168 C716,166 713,161 714,155 Z" fill="#c0c0c0"/>
 <path d="M718,190 C722,190 724,198 721,206 C717,204 715,196 718,190 Z" fill="#c0c0c0"/>
 <path d="M694,203 C698,206 699,212 697,217 C693,214 692,208 694,203 Z" fill="#b0b0b0"/>
 <ellipse cx="699" cy="172" rx="3" ry="8" fill="#5a5a7a"/>
 <path d="M703,150 C694,170 694,200 703,222 M706,160 C712,175 712,195 706,212" stroke="#1a1a90" stroke-width="1.5" fill="none"/>
 <rect x="688" y="228" width="14" height="12" fill="#8ab060" rx="3"/>
 <rect x="688" y="236" width="24" height="12" fill="#4a6a8c" rx="4" stroke="#222" stroke-width="0.8"/>
 <polygon points="688,250 704,248 712,258 712,346 688,350" fill="#7ab088" stroke="#3a5a44" stroke-width="1"/>
 <circle cx="727" cy="301" r="15" fill="#90c870" stroke="#222" stroke-width="1"/>
 <path d="M708,272 H720 V314 H708" stroke="#c8c040" stroke-width="4" fill="none"/>
 <rect x="711" y="278" width="6" height="30" fill="#707070"/>
 <polygon points="712,316 772,323 772,337 712,332" fill="url(#dotsD)"/>
 <polygon points="689,338 712,333 772,338 772,340 689,376" fill="#6c6c6c"/>
 <ellipse cx="704" cy="352" rx="12" ry="7" fill="#9a80c8"/>
 <rect x="712" y="349" width="14" height="4" fill="#9a80c8"/>
</g>
<!-- right face door frame details -->
<polygon points="675,175 689,168 689,380 675,386" fill="#141414"/>
<line x1="682" y1="172" x2="682" y2="382" stroke="#333" stroke-width="1"/>
<rect x="682" y="256" width="6" height="44" fill="#1a1a1a" stroke="#d8d8d8" stroke-width="1.5"/>
<rect x="689" y="253" width="6" height="44" fill="#2a2a2a" stroke="#c8c8c8" stroke-width="1.2"/>
<polyline points="583,210 783,116" stroke="#3a3a3a" stroke-width="1" fill="none"/>
<polyline points="588,428 783,334" stroke="#555" stroke-width="1" fill="none"/>

<!-- ===== top glass ===== -->
<polygon points="221.5,129.5 430,27.5 783,94 768,93 577,192" fill="#98a8bb"/>
<polygon points="238,130 424,41 424,163" fill="#3f5267"/>
<polyline points="238,129 424,163" stroke="#6e9ed0" stroke-width="1.2" fill="none"/>
<polygon points="226,131 432,32.5 436,41 242,130" fill="#2c3b50"/>
<polyline points="236,127 430,36" stroke="#6688b0" stroke-width="1.2" fill="none"/>
<!-- back post -->
<polygon points="421.5,38 441.5,40 441.5,166 421.5,163" fill="#2e3e54"/>
<polyline points="424.5,48 424.5,160" stroke="#b8c8d8" stroke-width="1" stroke-dasharray="30,3,12,4,60" fill="none"/>
<polyline points="427.5,45 427.5,162" stroke="#8aa0b8" stroke-width="1" fill="none"/>
<polyline points="432.5,45 432.5,162" stroke="#9ab0c8" stroke-width="1" stroke-dasharray="50,5,20,3,40" fill="none"/>
<polyline points="437,60 437,150" stroke="#5a7088" stroke-width="1" fill="none"/>
<polyline points="441,45 441,164" stroke="#7a90a8" stroke-width="1" fill="none"/>
<!-- back beam -->
<polygon points="432,33 783,99 783,104 758,104 442,43" fill="url(#dotsB)"/>
<!-- outer black edges of top -->
<polygon points="221.5,129.5 430,27.5 783,94 783,99 432,32.5 227,131" fill="#0a0a0a"/>
<!-- blue reel tops -->
<path d="M558,194 L560,186 C566,182 572,178 580,175 C588,170 596,167 604,164 C610,158 618,154 626,150 C634,146 640,143 648,140 C656,134 666,129 676,127 C686,125 696,127 698,133 L700,142 L590,200 Z" fill="#2430c8"/>
<path d="M566,186 C574,180 582,178 590,178 M600,168 C608,162 616,160 624,160 M630,152 C640,146 650,144 656,145 M660,136 C670,130 682,128 692,131" stroke="#4a5ae8" stroke-width="2" fill="none"/>
<!-- right face top beam -->
<polygon points="577,192.5 768,92 783,94 783,110 583,207" fill="#161616"/>
<polyline points="580,197 783,99" stroke="#8a8a80" stroke-width="1" stroke-dasharray="1.5,1" fill="none"/>
<polyline points="581,201 783,103" stroke="#6a6a60" stroke-width="1" stroke-dasharray="1.5,1" fill="none"/>
<!-- stack light -->
<rect x="562" y="93" width="16" height="17" fill="#f0f000" stroke="#333" stroke-width="0.8"/>
<ellipse cx="570" cy="92" rx="8" ry="3.2" fill="#f4f4f4" stroke="#333" stroke-width="0.9"/>
<path d="M563 93 Q570 96 577 93" stroke="#777" stroke-width="0.6" fill="none"/>
<rect x="562" y="110" width="16" height="17" fill="#e81010" stroke="#333" stroke-width="0.8"/>
<rect x="562" y="127" width="16" height="16" fill="#10d010" stroke="#333" stroke-width="0.8"/>
<rect x="567" y="143" width="6" height="4" fill="#505050"/>
<ellipse cx="570" cy="152" rx="5" ry="5.5" fill="#9a9ab8" stroke="#1a1a1a" stroke-width="1.4"/>
<ellipse cx="570" cy="160" rx="7" ry="2.8" fill="#f0f0f0" stroke="#1a1a1a" stroke-width="1.2"/>
<!-- ===== front face ===== -->
<!-- opening interior -->
<g clip-path="url(#oF)">
 <rect x="237" y="260" width="330" height="180" fill="#767676"/>
 <polygon points="249,271 368,292 368,296 249,352" fill="#3d3d3d"/>
 <polygon points="249,348 368,292 376,296 376,304 249,364" fill="#262626"/>
 <polyline points="249,352 370,295" stroke="#b0b0b0" stroke-width="1.5" stroke-dasharray="1.5,1" fill="none"/>
 <polyline points="249,356 372,299" stroke="#5a5a5a" stroke-width="1" fill="none"/>
 <polyline points="249,360 374,303" stroke="#8a8a8a" stroke-width="1.2" stroke-dasharray="1.5,1" fill="none"/>
 <rect x="237" y="266" width="12" height="100" fill="#161616"/>
 <polygon points="366,292 445,306 445,323 348,307" fill="#a8a8a8"/>
 <!-- shelf bar -->
 <polygon points="348,307 438,322 438,330 348,315" fill="#e4e4e4" stroke="#222" stroke-width="1"/>
 <!-- profile box -->
 <polygon points="357,377 424,352 440,352 440,360 365,386 357,386" fill="#3a3a3a" opacity="0.6"/>
 <polygon points="331,353 388,327 426,332 357,357" fill="#929292" stroke="#1a1a1a" stroke-width="1"/>
 <polyline points="350,355 410,330 M354,356 415,331 M361,352 419,332" stroke="#2a2a2a" stroke-width="1.2" fill="none"/>
 <polygon points="357,357 426,332 426,353 357,378" fill="#262626"/>
 <polyline points="360,362 424,338 M360,368 424,344" stroke="#505050" stroke-width="0.8" fill="none"/>
 <polygon points="331,353 357,357 357,378 331,374" fill="#cacad8" stroke="#111" stroke-width="1"/>
 <circle cx="334" cy="369" r="1.2" fill="#111"/><circle cx="354" cy="373" r="1.2" fill="#111"/>
 <polygon points="362,322 382,318 392,322 372,327" fill="#8a8a92"/>
 <!-- white slide plate -->
 <polygon points="430,366 466,358 492,370 490,392 430,380" fill="#e6e6e6" stroke="#1a1a1a" stroke-width="1"/>
 <polyline points="430,382 490,394" stroke="#111" stroke-width="2" fill="none"/>
 <g fill="#333"><circle cx="445" cy="372" r="0.9"/><circle cx="470" cy="376" r="0.9"/><circle cx="480" cy="384" r="0.9"/></g>
 <!-- machine in lower right -->
 <polygon points="463,314 557,330 557,392 463,382" fill="#a8d8a0"/>
 <polyline points="516.7,387 516.7,364 546,331" stroke="#111" stroke-width="1.3" fill="none"/>
 <polygon points="465,329 508,336 508,349 465,342" fill="#e8d830" stroke="#3a3a00" stroke-width="1"/>
 <polyline points="468,333 506,339 M468,338 506,344" stroke="#7a6a00" stroke-width="1" stroke-dasharray="4,2" fill="none"/>
 <polygon points="458,320 476,322 476,329 458,327" fill="#2a6ad0"/>
 <polygon points="506,333 520,336 520,348 506,346" fill="#2a6ad0"/>
 <rect x="459" y="328" width="7" height="28" fill="#e048c8" stroke="#333" stroke-width="0.6"/>
 <rect x="472" y="350" width="9" height="14" fill="#e09090" stroke="#333" stroke-width="0.6"/>
 <polygon points="456,360 492,366 492,372 456,366" fill="#d0b8e8"/>
 <circle cx="529" cy="372" r="10" fill="#111"/>
 <circle cx="527" cy="373" r="7" fill="#e89888"/>
 <circle cx="527" cy="373" r="2.5" fill="#c06060"/>
 <path d="M466,384 C468,376 478,374 490,380 L557,392 L557,418 L480,406 C470,402 464,394 466,384 Z" fill="#1e1e1e"/>
 <path d="M470,386 C474,380 482,380 488,384" stroke="#888" stroke-width="1.2" fill="none"/>
 <polygon points="494,387 553,396 553,403 494,394" fill="#e0c0f0"/>
 <circle cx="503" cy="392" r="2.5" fill="#20a020"/>
 <circle cx="517" cy="395" r="2.5" fill="#20a020"/>
 <circle cx="533" cy="398" r="2.5" fill="#20a020"/>
 <circle cx="548" cy="400" r="2.5" fill="#20a020"/>
 <rect x="439" y="306" width="18" height="10" fill="#1a1a2a"/>
 <rect x="441" y="312" width="6" height="34" fill="#4a7ad0" stroke="#222" stroke-width="0.8"/>
 <rect x="448" y="316" width="6" height="30" fill="#e8e030" stroke="#222" stroke-width="0.8"/>
 <rect x="444" y="344" width="14" height="6" fill="#2a2a2a"/>
 <line x1="436" y1="318" x2="436" y2="360" stroke="#9070d0" stroke-width="1.5"/>
 <line x1="436" y1="328" x2="470" y2="333" stroke="#9070d0" stroke-width="1.5"/>
 <rect x="420" y="352" width="14" height="7" fill="#2a7ad0"/>
 <g fill="#1a5a1a"><circle cx="480" cy="360" r="1.8"/><circle cx="492" cy="352" r="1.8"/><circle cx="530" cy="340" r="1.8"/><circle cx="545" cy="350" r="1.8"/><circle cx="537" cy="358" r="1.8"/><circle cx="548" cy="378" r="1.8"/><circle cx="502" cy="356" r="1.8"/><circle cx="510" cy="364" r="1.8"/></g>
 <polygon points="556,326 566,328 566,432 556,430" fill="#141414"/>
</g>
</g>
<!-- glass interior (upper right front) -->
<g clip-path="url(#gF)">
 <rect x="440" y="170" width="130" height="160" fill="#d4d4d4"/>
 <circle cx="548" cy="244" r="39" fill="#4848cc"/>
 <path d="M512,238 C515,215 535,202 556,205" stroke="#2c2c9a" stroke-width="1.5" fill="none"/>
 <path d="M523,214 C520,222 521,230 526,234 C528,226 528,218 523,214 Z" fill="#f0f0f0" stroke="#2a2a80" stroke-width="1"/>
 <path d="M548,208 C556,206 562,212 560,220 C554,220 549,216 548,208 Z" fill="#e8e8e8" stroke="#2a2a80" stroke-width="1"/>
 <polygon points="450,296 536,272 566,276 566,330 450,330" fill="#b6daa8"/>
 <g fill="#4a6a4a"><circle cx="470" cy="300" r="1.2"/><circle cx="500" cy="305" r="1.2"/><circle cx="520" cy="292" r="1.2"/><circle cx="485" cy="292" r="1.2"/></g>
 <polygon points="533,234 558,238 558,325 533,321" fill="#e6d848" stroke="#4a4a10" stroke-width="1"/>
 <circle cx="554" cy="296" r="1.5" fill="#333"/>
 <circle cx="542" cy="249" r="11" fill="#2a2a2a"/>
 <path d="M536,240 A11,11 0 0 1 552,252" stroke="#d8c840" stroke-width="1.5" fill="none"/>
 <circle cx="527" cy="253" r="9" fill="#5cb04c"/>
 <circle cx="535" cy="251" r="7" fill="#e08848"/>
 <polygon points="455,265 478,262 480,300 455,304" fill="#a4a4ac" stroke="#6a6a70" stroke-width="0.6"/>
 <rect x="443" y="246" width="15" height="56" fill="#5a8ed6" stroke="#2a3a5a" stroke-width="0.8"/>
 <line x1="450" y1="248" x2="450" y2="300" stroke="#2a3a5a" stroke-width="0.8"/>
 <rect x="447" y="237" width="7" height="9" fill="#d8d040" stroke="#555" stroke-width="0.5"/>
 <polygon points="477,246 500,242 511,248 511,292 477,296" fill="#b8b8c4" stroke="#707078" stroke-width="0.6"/>
 <rect x="497" y="255" width="12" height="20" fill="#e4e4e8" stroke="#888" stroke-width="0.5"/>
 <rect x="483" y="226" width="16" height="25" fill="#5a8ed6" stroke="#2a3a5a" stroke-width="0.8"/>
 <rect x="487" y="216" width="9" height="10" fill="#b8b8b8" stroke="#555" stroke-width="0.6"/>
 <rect x="486" y="255" width="5" height="38" fill="#d8d040"/>
 <rect x="493" y="255" width="3" height="38" fill="#5a8ed6"/>
 <rect x="488" y="288" width="18" height="7" fill="#5a8ed6" stroke="#333" stroke-width="0.5"/>
 <rect x="520" y="284" width="14" height="13" fill="#d8c0e0" stroke="#555" stroke-width="0.6"/>
 <rect x="478" y="305" width="22" height="10" fill="#d8c0e0" stroke="#555" stroke-width="0.6"/>
 <rect x="515" y="314" width="18" height="8" fill="#d8c0e0" stroke="#555" stroke-width="0.6"/>
</g>
<polyline points="426,304.5 566,329.5" stroke="#1a1a1a" stroke-width="2" fill="none"/>
<!-- upper gray panel -->
<polygon points="237,144 426,179 426,303.5 237,269.5" fill="#7e7e7e"/>
<polygon points="368,293 428,262 442,264 442,306.4" fill="#b4b4b4"/>
<polygon points="362,292 428,258 442,260 442,265 428,263 368,294" fill="#8e8e8e"/>
<polyline points="364,292 430,259" stroke="#dcdcdc" stroke-width="1" stroke-dasharray="1.5,1" fill="none"/>
<polyline points="237,268 442,304.7" stroke="#a8a8a8" stroke-width="1.5" fill="none"/>
<polyline points="237,270.5 442,307.2" stroke="#1e1e1e" stroke-width="1.5" fill="none"/>
<!-- HMI -->
<polygon points="371,182.5 427,192 427,239 371,229" fill="#262626" stroke="#111" stroke-width="1"/>
<polygon points="378.5,192 419.5,198.5 419.5,224.5 378.5,218" fill="#a8e4ec" stroke="#111" stroke-width="0.8"/>
<!-- middle post -->
<polygon points="426,179 442,182 442,262 426,262" fill="#8e8e8e"/>
<line x1="429" y1="182" x2="429" y2="262" stroke="#e8e8e8" stroke-width="1"/>
<line x1="434" y1="182" x2="434" y2="262" stroke="#555" stroke-width="1"/>
<line x1="439" y1="182" x2="439" y2="262" stroke="#c8c8c8" stroke-width="1"/>
<circle cx="363" cy="247" r="4.5" fill="#18b818" stroke="#063" stroke-width="1"/>
<circle cx="388" cy="253" r="4.5" fill="#18b818" stroke="#063" stroke-width="1"/>
<circle cx="412" cy="257" r="4.5" fill="#6a6ad8" stroke="#224" stroke-width="1"/>
<circle cx="436" cy="261" r="5" fill="#e01010" stroke="#300" stroke-width="1"/>
<!-- left post -->
<polygon points="221.5,128 237,131 237,370 221.5,368" fill="#1c1c1c"/>
<line x1="224.5" y1="140" x2="224.5" y2="365" stroke="#e8e8e8" stroke-width="1"/>
<line x1="231" y1="140" x2="231" y2="368" stroke="#d0d0d0" stroke-width="1"/>
<!-- front top beam -->
<polygon points="221.5,126.5 575,188 578,207 221.5,143.5" fill="url(#dots)"/><polyline points="221.5,127.5 575,189" stroke="#0a0a0a" stroke-width="2" fill="none"/>
<!-- front-right post -->
<polygon points="565,200 591,204 591,440 565,436" fill="#141414"/>
<line x1="569.5" y1="206" x2="569.5" y2="434" stroke="#c8c8c8" stroke-width="1"/>
<line x1="573.5" y1="206" x2="573.5" y2="434" stroke="#e0e0e0" stroke-width="0.8"/>
<line x1="577" y1="206" x2="577" y2="436" stroke="#909090" stroke-width="1"/>
<line x1="584" y1="210" x2="584" y2="438" stroke="#3a3a3a" stroke-width="1"/>
<!-- bottom front beam -->
<polygon points="221.5,363 580,426 580,441 221.5,377" fill="url(#dots)"/>

<!-- ===== slab ===== -->
<polygon points="188,392 224,375 582,441 529,465 188,404" fill="url(#slabG)"/>
<polygon points="188,404 529,465 529,471 188,410" fill="#5a5a5a"/>
<polyline points="188,405 529,466" stroke="#a8a8a8" stroke-width="1" fill="none"/>
<polyline points="188,392 224,375" stroke="#111" stroke-width="1" fill="none"/>
<polygon points="529,465 582,441 582,446 529,471" fill="#4a4a4a"/>
<!-- axis -->
<line x1="227.5" y1="596" x2="227.5" y2="576" stroke="#1a2ee0" stroke-width="3.5"/>
<path d="M222.5 578 L227.5 571 L232.5 578 Z" fill="#1a2ee0"/>
<text x="224" y="568" font-family="Liberation Sans" font-size="9" font-weight="bold" fill="#2a3ae0">Z</text>
</svg>
<svg style="position:absolute;left:0;top:0" width="783" height="24" viewBox="0 0 783 24">
 <rect x="442" y="0" width="341" height="2.5" fill="#e6ecf2"/>
 <line x1="442" y1="2.8" x2="783" y2="2.8" stroke="#b4bcc6" stroke-width="0.8"/>
 <!-- zoom fit -->
 <circle cx="506" cy="11" r="5" fill="#e4e6ea" stroke="#707070" stroke-width="1.3"/>
 <path d="M504 9 h1 M508 9 h-1 M504 13 h1 M508 13 h-1" stroke="#555" stroke-width="1"/>
 <line x1="510" y1="15" x2="514" y2="19" stroke="#3a7ad0" stroke-width="2.2"/>
 <!-- zoom area -->
 <circle cx="529" cy="11" r="5" fill="#e4e6ea" stroke="#707070" stroke-width="1.3"/>
 <path d="M527 8 v3 h3" stroke="#555" stroke-width="1" fill="none"/>
 <line x1="533" y1="15" x2="537" y2="19" stroke="#3a7ad0" stroke-width="2.2"/>
 <!-- previous view -->
 <path d="M547 9 L555 17" stroke="#5a9ad8" stroke-width="4" stroke-linecap="round"/>
 <path d="M547 9 L555 17" stroke="#c8e4f8" stroke-width="1.5" stroke-linecap="round"/>
 <path d="M554 7 L559 9 M554 7 L556 12" stroke="#2a5aa0" stroke-width="1.2" fill="none"/>
 <!-- section view -->
 <path d="M569 8 L576 6 L583 8 L583 19 L576 17 L569 19 Z" fill="#3a7ad0" stroke="#2a3a6a" stroke-width="0.8"/>
 <rect x="571" y="8" width="3" height="10" fill="#d8c820"/>
 <rect x="577" y="8" width="3" height="10" fill="#40a040"/>
 <!-- dynamic annotation -->
 <path d="M593 19 L596 12 L599 19 Z" fill="#3a7ad0"/>
 <path d="M598 9 A5 5 0 1 1 604 15" stroke="#333" stroke-width="1.3" fill="none"/>
 <path d="M602 6 L605 8 L602 10" stroke="#333" stroke-width="1" fill="none"/>
 <!-- view orientation cube -->
 <path d="M615 10 L620 6 L630 6 L630 16 L625 20 L615 20 Z" fill="#5aa0e0" stroke="#444" stroke-width="0.8"/>
 <path d="M615 10 L625 10 L630 6 M625 10 L625 20" stroke="#444" stroke-width="0.8" fill="none"/>
 <path d="M626 10 L630 6 L630 16 L626 20 Z" fill="#e8e8f0"/>
 <path d="M627 12 L629 14 M629 12 L627 14" stroke="#d03030" stroke-width="0.8"/>
 <path d="M638 12 L642 12 L640 14 Z" fill="#777"/>
 <!-- display style cube -->
 <path d="M651 9 L655 5 L667 5 L667 16 L663 20 L651 20 Z" fill="#b8d0f0" stroke="#555" stroke-width="0.9"/>
 <path d="M651 9 L663 9 L667 5 M663 9 L663 20" stroke="#555" stroke-width="0.9" fill="none"/>
 <rect x="652" y="10" width="10" height="9" fill="#4a8ad8"/>
 <path d="M675 12 L679 12 L677 14 Z" fill="#777"/>
 <!-- glasses -->
 <circle cx="691" cy="14" r="3.5" fill="none" stroke="#555" stroke-width="1.2"/>
 <circle cx="699" cy="15" r="3.5" fill="none" stroke="#555" stroke-width="1.2"/>
 <path d="M688 12 L690 7 M702 12 L705 9" stroke="#555" stroke-width="1.2"/>
 <path d="M711 12 L715 12 L713 14 Z" fill="#777"/>
 <!-- appearance sphere -->
 <circle cx="731" cy="12" r="7.5" fill="#2aa82a"/>
 <path d="M731 4.5 A7.5 7.5 0 0 1 738.5 12 L731 12 Z" fill="#e03030"/>
 <path d="M723.5 12 A7.5 7.5 0 0 1 731 4.5 L731 12 Z" fill="#3a6ae0"/>
 <path d="M731 12 L738.5 12 A7.5 7.5 0 0 1 731 19.5 Z" fill="#f0c020"/>
 <circle cx="728" cy="9" r="2" fill="#ffffff" opacity="0.5"/>
 <!-- scene sphere -->
 <circle cx="754" cy="10.5" r="6.5" fill="#2aa82a"/>
 <path d="M754 4 A6.5 6.5 0 0 1 760.5 10.5 L754 10.5 Z" fill="#e03030"/>
 <path d="M747.5 10.5 A6.5 6.5 0 0 1 754 4 L754 10.5 Z" fill="#3a6ae0"/>
 <path d="M746 16 h16 v4 h-16 Z" fill="#e8e8e8"/>
 <path d="M746 16 h3 v2 h-3 Z M752 16 h3 v2 h-3 Z M758 16 h3 v2 h-3 Z M749 18 h3 v2 h-3 Z M755 18 h3 v2 h-3 Z" fill="#222"/>
 <path d="M771 12 L775 12 L773 14 Z" fill="#777"/>
</svg>
<div style="position:absolute;left:186px;top:309px;width:9px;height:38px;background:#f0f0f0;border:2px solid #444;border-left:none"></div>
<svg style="position:absolute;left:186px;top:309px" width="9" height="38"><path d="M3 10 L6 7.5 L6 12.5 Z M3 19 L6 16.5 L6 21.5 Z M3 28 L6 25.5 L6 30.5 Z" fill="#333"/></svg>
</body></html>
